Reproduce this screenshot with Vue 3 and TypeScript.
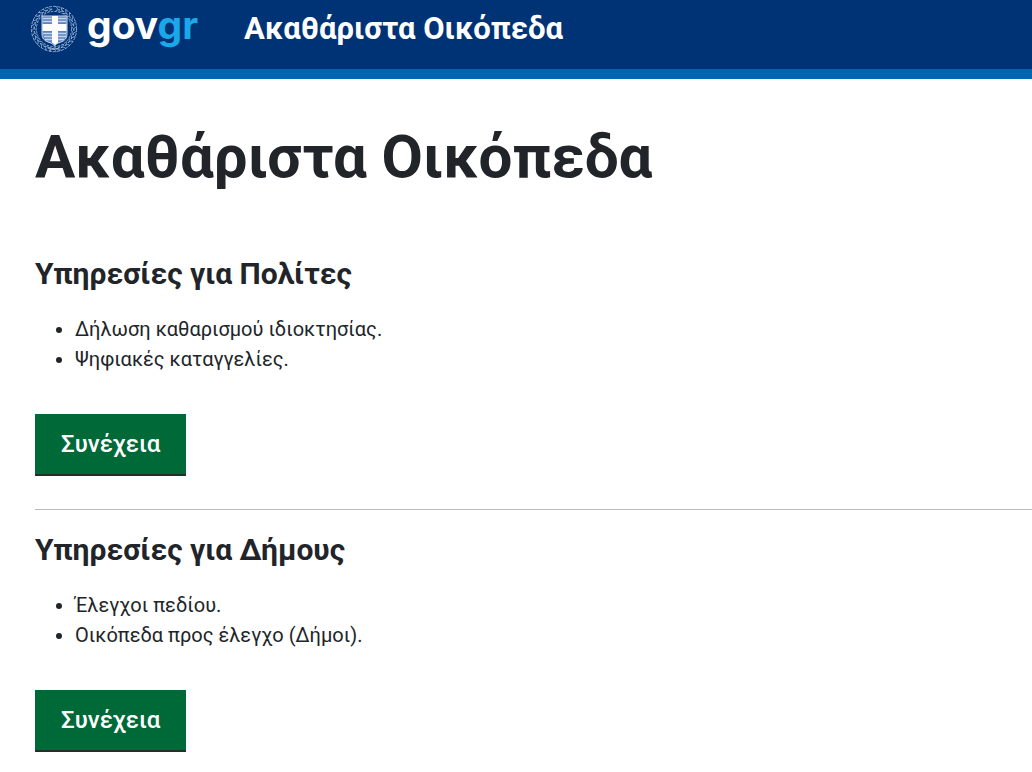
<script setup lang="ts">
interface ServiceGroup {
  id: string
  title: string
  items: string[]
}

const title = 'Ακαθάριστα Οικόπεδα'

const groups: ServiceGroup[] = [
  {
    id: 'citizens',
    title: 'Υπηρεσίες για Πολίτες',
    items: ['Δήλωση καθαρισμού ιδιοκτησίας.', 'Ψηφιακές καταγγελίες.'],
  },
  {
    id: 'municipalities',
    title: 'Υπηρεσίες για Δήμους',
    items: ['Έλεγχοι πεδίου.', 'Οικόπεδα προς έλεγχο (Δήμοι).'],
  },
]

// Leaves of the laurel wreath, in degrees clockwise from the top opening
const leaves: number[] = Array.from({ length: 27 }, (_, i) => 11 + i * 13)
</script>

<template>
  <div class="page">
    <header class="header">
      <a class="brand" href="#" aria-label="gov.gr">
        <svg class="emblem" viewBox="0 0 48 48" aria-hidden="true">
          <g fill="none" stroke="#9fb6da" stroke-width="0.8">
            <circle cx="24" cy="24" r="22.6" stroke-dasharray="3 1.2" stroke-width="0.9" />
            <circle cx="24" cy="24" r="17.6" stroke-dasharray="2.4 1.2" stroke-width="0.8" />
            <g v-for="angle in leaves" :key="angle" :transform="`rotate(${angle} 24 24)`">
              <path d="M26 4.2 C24 4.2 22.6 3.2 22 1.4" />
              <path d="M26 4.2 C24 4.4 22.8 5 22 6.4" />
            </g>
            <path d="M19 46 Q24 40 30 46 M18 42 Q24 47 30 42" />
          </g>
          <path d="M12 11H37V29Q37 35 31 37Q26 38 24.5 41Q23 38 18 37Q12 35 12 29Z" fill="#5f84bb" />
          <path
            d="M13 13.5H36M13 16.5H36M13 28.5H36M14 31.5H36M15 34.5H34"
            stroke="#c3d3ea"
            stroke-width="1.3"
          />
          <path d="M12 11H37V29Q37 35 31 37Q26 38 24.5 41Q23 38 18 37Q12 35 12 29Z" fill="none" stroke="#c9d7ec" stroke-width="1" />
          <path d="M22 11H28V19H36.5V26H28V37.5L25 40L22 37.5V26H12.5V19H22Z" fill="#fff" />
        </svg>
        <span class="wordmark">gov<span class="wordmark-gr">gr</span></span>
      </a>
      <a class="service-name" href="#">{{ title }}</a>
    </header>

    <main class="content">
      <h1>{{ title }}</h1>
      <section v-for="group in groups" :key="group.id" class="group">
        <h2>{{ group.title }}</h2>
        <ul>
          <li v-for="item in group.items" :key="item">{{ item }}</li>
        </ul>
        <button type="button">Συνέχεια</button>
      </section>
    </main>
  </div>
</template>

<style>
body {
  margin: 0;
  background: #fff;
}
</style>

<style scoped>
.page {
  color: #212529;
  font-family: Roboto, "Liberation Sans", sans-serif;
  font-size: 20px;
  line-height: 30px;
  overflow-x: hidden;
}

.header {
  display: flex;
  align-items: flex-start;
  gap: 46px;
  box-sizing: border-box;
  height: 79px;
  padding: 5px 30px 0;
  background: #003375;
  border-bottom: 10px solid #0065b3;
}

.brand {
  display: flex;
  gap: 9px;
  color: #fff;
  text-decoration: none;
}

.emblem {
  width: 48px;
  height: 48px;
}

.wordmark {
  font-family: Inter, sans-serif;
  font-size: 39px;
  font-weight: 700;
  line-height: 40px;
}

.wordmark-gr {
  color: #1ba8ea;
}

.service-name {
  color: #fff;
  font-size: 31px;
  font-weight: 700;
  line-height: 48px;
  text-decoration: none;
}

.content {
  padding: 40px 0 20px 35px;
}

h1 {
  margin: 0 0 61px;
  font-size: 60px;
  font-weight: 700;
  line-height: 76px;
}

h2 {
  margin: 0 0 22px;
  font-size: 30px;
  font-weight: 700;
  line-height: 36px;
}

ul {
  margin: 0 0 40px;
  padding-left: 40px;
}

.group + .group {
  margin-top: 35px;
  padding-top: 22px;
  border-top: 1px solid #b9bcbe;
}

button {
  display: block;
  margin: 0;
  padding: 15px 26px;
  border: 0;
  background: #006938;
  box-shadow: 0 2px 0 #20302b;
  color: #fff;
  font-family: inherit;
  font-size: 24px;
  font-weight: 500;
  line-height: 30px;
  cursor: pointer;
}
</style>
